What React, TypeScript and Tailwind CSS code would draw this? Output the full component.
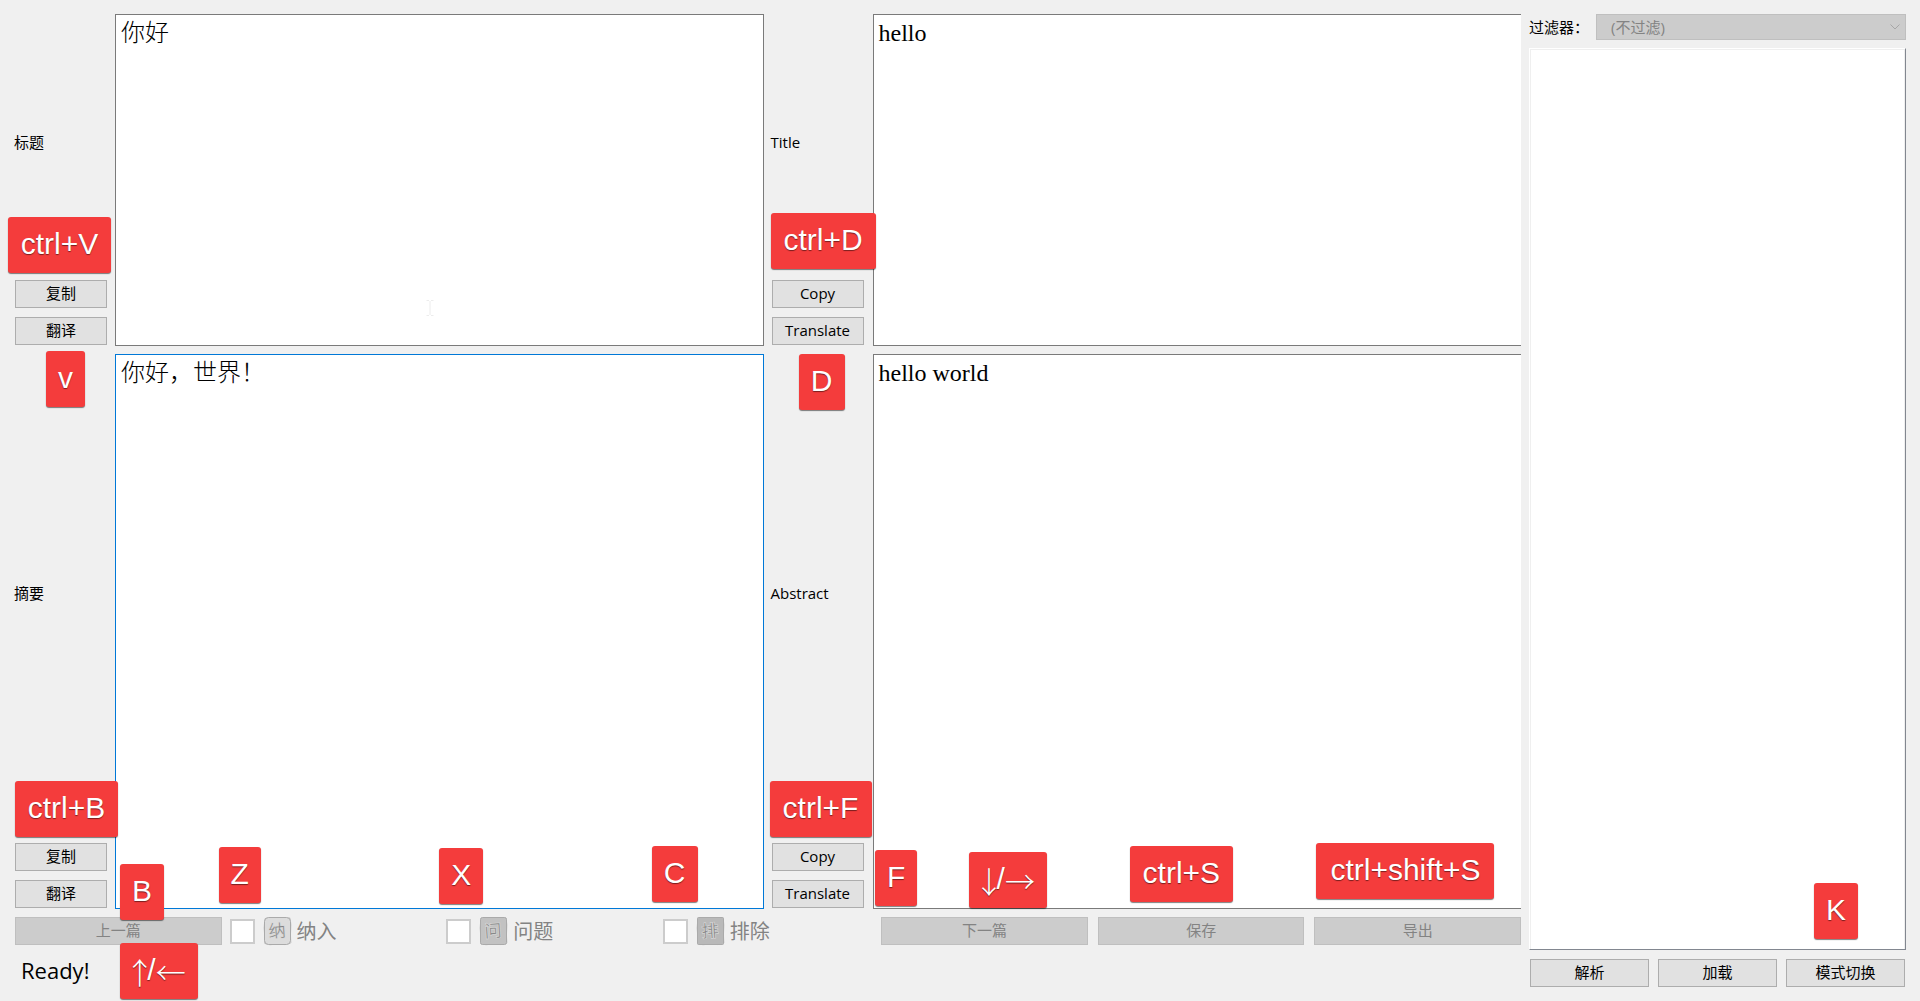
import React from "react";

const uiFont = "font-['Open_Sans','Noto_Sans_CJK_SC',sans-serif]";

function KeyBadge({ keys, place }: { keys: string; place: string }) {
  return (
    <kbd
      className={`pointer-events-none absolute z-10 flex h-14 items-center justify-center whitespace-nowrap rounded-[3px] bg-[#f43c3c] pb-0.5 font-['Liberation_Sans',sans-serif] text-[30px] text-white shadow-[0_1px_1px_rgba(0,0,0,0.5)] [text-shadow:0_1px_1px_rgba(0,0,0,0.5)] ${place}`}
    >
      {keys.split(/([↑↓←→])/).map((part, i) =>
        /[↑↓←→]/.test(part) ? (
          <span
            key={i}
            className={`flex justify-center pt-0.5 font-['Noto_Sans_CJK_SC',sans-serif] font-light leading-none ${/[↑↓]/.test(part) ? "w-[15px]" : "w-[30px]"}`}
          >
            {part}
          </span>
        ) : (
          part
        ),
      )}
    </kbd>
  );
}

function PushButton({ children, className = "", disabled = false }: { children: React.ReactNode; className?: string; disabled?: boolean }) {
  return (
    <button
      type="button"
      disabled={disabled}
      className={`flex h-7 items-center justify-center border border-[#adadad] bg-[#e1e1e1] pb-0.5 disabled:border-[#bfbfbf] disabled:bg-[#cccccc] disabled:text-[#838383] ${className}`}
    >
      {children}
    </button>
  );
}

function SideColumn({ id, label, actions, children }: { id: string; label: string; actions: string[]; children?: React.ReactNode }) {
  return (
    <div className="relative flex flex-col pb-px">
      <label htmlFor={id} className="flex flex-1 items-center pb-0.5">
        {label}
      </label>
      <div className="ml-px flex w-[92px] flex-col gap-[9px] pt-[9px]">
        {actions.map((a) => (
          <PushButton key={a}>{a}</PushButton>
        ))}
      </div>
      {children}
    </div>
  );
}

function Editor({ id, text, edge, children }: { id: string; text: string; edge: string; children?: React.ReactNode }) {
  return (
    <div className="relative flex">
      <textarea
        id={id}
        defaultValue={text}
        spellCheck={false}
        className={`w-full flex-1 resize-none bg-white px-[5px] pt-1 font-['Liberation_Serif','Noto_Sans_CJK_SC',serif] text-2xl font-light leading-7 text-black outline-none ${edge}`}
      />
      {children}
    </div>
  );
}

function Seal({ char, round, fill }: { char: string; round: number; fill: string }) {
  return (
    <svg viewBox="0 0 29 30" className="h-[30px] w-[29px] shrink-0 overflow-visible" aria-hidden="true">
      <path d="M2 2.5 L10 1.5 L19 2 L27 1.8 L28 9 L27.4 19 L28 27 L22 28.6 L13 28 L7 28.8 L1.5 27.5 L1.8 20 L1 12 Z" fill="none" stroke="#d0d0d0" strokeWidth="1" />
      <rect x="1.5" y="1.5" width="26" height="27" rx={round} fill={fill} stroke="#aaaaaa" strokeWidth="1" />
      <text
        x="14"
        y="21"
        textAnchor="middle"
        fontSize="17"
        fontWeight="300"
        fontFamily="'Noto Sans CJK SC', sans-serif"
        fill="#858585"
        stroke="#d6d6d6"
        strokeWidth="1.4"
        paintOrder="stroke"
        transform="rotate(-4 14 15)"
      >
        {char}
      </text>
    </svg>
  );
}

function MarkOption({ label, char, round, fill, children }: { label: string; char: string; round: number; fill: string; children?: React.ReactNode }) {
  return (
    <div className="relative flex h-7 items-center">
      <label className="-ml-0.5 flex items-center text-[#838383]">
        <input type="checkbox" disabled className="size-[25px] shrink-0 appearance-none border-2 border-[#cccccc] bg-white" />
        <span className="ml-2 flex items-center gap-[5px]">
          <Seal char={char} round={round} fill={fill} />
          <span className="pt-0.5 text-xl leading-7">{label}</span>
        </span>
      </label>
      {children}
    </div>
  );
}

export default function App() {
  return (
    <div className={`flex min-h-screen gap-2 overflow-hidden bg-[#f0f0f0] pl-3.5 pr-3.5 pt-3.5 text-[15px] leading-5 text-black ${uiFont}`}>
      <main className="flex min-w-0 flex-1 flex-col">
        <div className="grid flex-1 grid-cols-[94px_1fr_95px_1fr] grid-rows-[332fr_555fr] gap-x-[7px] gap-y-2">
          <SideColumn id="title-zh" label="标题" actions={["复制", "翻译"]}>
            <KeyBadge keys="ctrl+V" place="w-[103px] -left-1.5 bottom-[73px]" />
          </SideColumn>
          <Editor id="title-zh" text="你好" edge="border border-[#7a7a7a]">
            <svg viewBox="0 0 8 16" className="pointer-events-none absolute bottom-[30px] left-[311px] h-4 w-2" aria-hidden="true">
              <path d="M0.5 0.5H3M5 0.5H7.5M4 1V15M0.5 15.5H3M5 15.5H7.5" stroke="#ececec" fill="none" />
            </svg>
          </Editor>
          <SideColumn id="title-en" label="Title" actions={["Copy", "Translate"]}>
            <KeyBadge keys="ctrl+D" place="w-[105px] left-0 bottom-[77px]" />
          </SideColumn>
          <Editor id="title-en" text="hello" edge="border border-r-0 border-[#7a7a7a]" />

          <SideColumn id="abstract-zh" label="摘要" actions={["复制", "翻译"]}>
            <KeyBadge keys="v" place="w-[39px] left-8 -top-[3px]" />
            <KeyBadge keys="ctrl+B" place="w-[103px] left-px bottom-[72px]" />
          </SideColumn>
          <Editor id="abstract-zh" text="你好，世界！" edge="border border-[#0078d7]">
            <KeyBadge keys="B" place="w-11 left-[5px] -bottom-[11px]" />
          </Editor>
          <SideColumn id="abstract-en" label="Abstract" actions={["Copy", "Translate"]}>
            <KeyBadge keys="D" place="w-[46px] left-7 top-0" />
            <KeyBadge keys="ctrl+F" place="w-[102px] -left-px bottom-[72px]" />
          </SideColumn>
          <Editor id="abstract-en" text="hello world" edge="border border-r-0 border-[#7a7a7a]" />
        </div>

        <div className="ml-px mt-2 grid grid-cols-7 gap-2.5">
          <div className="relative">
            <PushButton disabled className="w-full">上一篇</PushButton>
            <KeyBadge keys="↑/←" place="w-[78px] left-[105px] top-[26px]" />
          </div>
          <MarkOption label="纳入" char="纳" round={4} fill="#dcdcdc">
            <KeyBadge keys="Z" place="w-[42px] -left-[13px] bottom-[42px]" />
          </MarkOption>
          <MarkOption label="问题" char="问" round={2} fill="#c2c2c2">
            <KeyBadge keys="X" place="w-11 -left-[9px] bottom-[41px]" />
          </MarkOption>
          <MarkOption label="排除" char="排" round={1} fill="#b9b9b9">
            <KeyBadge keys="C" place="w-[46px] -left-[13px] bottom-[43px]" />
          </MarkOption>
          <div className="relative">
            <PushButton disabled className="w-full">下一篇</PushButton>
            <KeyBadge keys="F" place="w-[42px] -left-1.5 bottom-[39px]" />
            <KeyBadge keys="↓/→" place="w-[78px] left-[88px] bottom-[37px]" />
          </div>
          <div className="relative">
            <PushButton disabled className="w-full">保存</PushButton>
            <KeyBadge keys="ctrl+S" place="w-[103px] left-8 bottom-[43px]" />
          </div>
          <div className="relative">
            <PushButton disabled className="w-full">导出</PushButton>
            <KeyBadge keys="ctrl+shift+S" place="w-[178px] left-0.5 bottom-[46px]" />
          </div>
        </div>

        <p role="status" className="flex h-14 items-center pb-1.5 pl-[7px] text-[22px]">
          Ready!
        </p>
      </main>

      <aside className="flex w-[377px] shrink-0 flex-col pb-3.5">
        <div className="flex h-[26px] items-center">
          <label htmlFor="filter" className="w-[67px] shrink-0 whitespace-nowrap">
            过滤器：
          </label>
          <div className="relative flex-1">
            <select
              id="filter"
              disabled
              className="block h-[26px] w-full appearance-none border border-[#bfbfbf] bg-[#cccccc] pl-3.5 text-[#838383] opacity-100"
            >
              <option>(不过滤)</option>
            </select>
            <svg viewBox="0 0 10 6" className="pointer-events-none absolute right-1.5 top-2.5 h-1.5 w-2.5" aria-hidden="true">
              <path d="M0.5 0.5L5 5L9.5 0.5" fill="none" stroke="#a6a6a6" />
            </svg>
          </div>
        </div>
        <div className="relative mt-2 flex-1 border-b border-l border-r border-t border-b-[#828790] border-l-white border-r-[#828790] border-t-white bg-white">
          <ul aria-label="文献列表" className="h-full border border-b-0 border-[#efefef]" />
          <KeyBadge keys="K" place="w-11 right-[47px] bottom-2.5" />
        </div>
        <div className="mt-[9px] grid grid-cols-3 gap-[9px] px-px">
          <PushButton>解析</PushButton>
          <PushButton>加载</PushButton>
          <PushButton>模式切换</PushButton>
        </div>
      </aside>
    </div>
  );
}
